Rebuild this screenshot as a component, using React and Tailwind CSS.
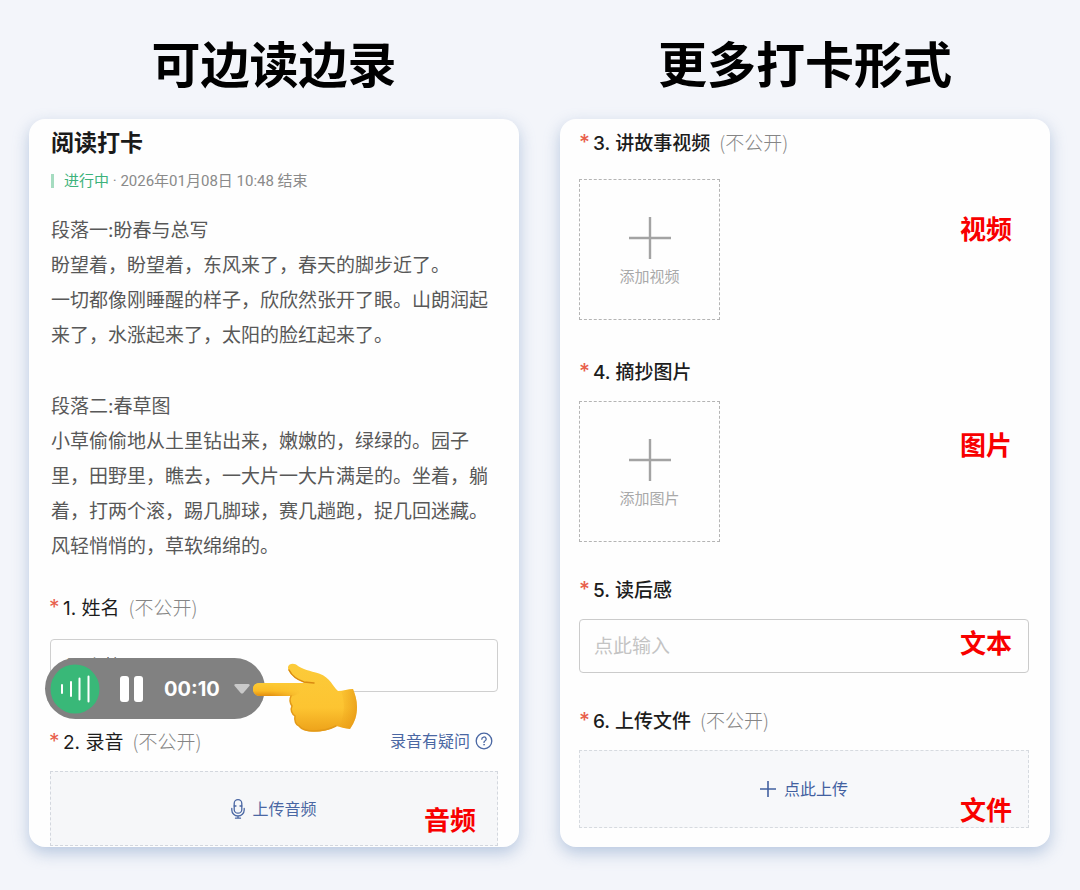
const CJK = "font-['Noto_Sans_CJK_SC',sans-serif]";
const LATIN = "font-['Inter','Noto_Sans_CJK_SC',sans-serif]";

function Title({ children }) {
  return (
    <h1 className={`${CJK} text-center text-[49px] font-bold leading-[60px] text-black`}>{children}</h1>
  );
}

function Card({ className, children }) {
  return (
    <section
      className={`${LATIN} grow rounded-2xl bg-[#fefefe] shadow-[0_6px_16px_rgba(120,150,195,0.48)] ${className}`}
    >
      {children}
    </section>
  );
}

function Question({ number, text, htmlFor, hidden, strong }) {
  const Label = htmlFor ? "label" : "h3";
  return (
    <Label
      htmlFor={htmlFor}
      className={`flex h-7 items-baseline text-[19px] leading-[28px] text-[#1c1c1c] ${strong ? "font-medium" : "font-normal"}`}
    >
      <span className={`w-[14px] shrink-0 text-[21px] text-[#e8604c] ${strong ? "" : "-ml-px"}`}>*</span>
      <span>
        {number}. {text}
      </span>
      {hidden && (
        <span className="ml-[9px] font-['Noto_Sans_CJK_SC',sans-serif] font-light text-[#858585]">(不公开)</span>
      )}
    </Label>
  );
}

function Tag({ className = "", children }) {
  return (
    <span className={`${CJK} text-[26px] font-bold leading-[26px] text-[#f80000] ${className}`}>{children}</span>
  );
}

function AddTile({ label, tag, tagClass }) {
  return (
    <div className="flex items-start justify-between pr-[17px]">
      <button
        type="button"
        className="flex size-[141px] flex-col items-center border border-dashed border-[#b4b4b4] pt-[37px]"
      >
        <svg viewBox="0 0 42 42" className="size-[42px]" stroke="#a3a3a3" strokeWidth="2.4" aria-hidden="true">
          <path d="M21 0V42M0 21H42" />
        </svg>
        <span className="mt-[7px] text-[15px] leading-[22px] text-[#a9a9a9]">{label}</span>
      </button>
      <Tag className={tagClass}>{tag}</Tag>
    </div>
  );
}

function Hand() {
  return (
    <svg viewBox="0 0 104 70" className="h-[70px] w-[104px]" aria-hidden="true">
      <defs>
        <linearGradient id="skin" x1="0" y1="0" x2="0" y2="1">
          <stop offset="0" stopColor="#fccb3a" />
          <stop offset="0.65" stopColor="#fdc431" />
          <stop offset="1" stopColor="#eda21a" />
        </linearGradient>
        <linearGradient id="finger" x1="0" y1="0" x2="0" y2="1">
          <stop offset="0" stopColor="#fccb35" />
          <stop offset="0.6" stopColor="#fbbb25" />
          <stop offset="1" stopColor="#e28d10" />
        </linearGradient>
        <linearGradient id="fade" x1="0" y1="0" x2="1" y2="0">
          <stop offset="0.3" stopColor="#fff" />
          <stop offset="0.85" stopColor="#000" />
        </linearGradient>
        <mask id="fingerFade" maskUnits="userSpaceOnUse" x="0" y="0" width="104" height="70">
          <rect width="56" height="70" fill="url(#fade)" />
        </mask>
        <linearGradient id="wrist" x1="0" y1="0" x2="1" y2="0">
          <stop offset="0" stopColor="#e99b12" stopOpacity="0" />
          <stop offset="1" stopColor="#e08d10" stopOpacity="0.6" />
        </linearGradient>
      </defs>
      <path
        fill="url(#skin)"
        d="M7 20C2 20 0 23 0 26C0 30 3 33 7 33L38 33C36 37 37 40 39 43C37 47 39 51 42 53C41 58 43 62 46 63C49 67 54 68.500 61 68.500C70 68.500 77 67 83 63C87 64 92 65.500 97 66C102 59 104 52 104 44C104 37 102 31 100 26C95 26 90 28 85 28C79 23 78 15 66 10.500C57 8 49 6 45 3C42 0 36 0 35 4C34.500 10 42 16 51 19.500L51 20Z"
      />
      <path
        fill="url(#finger)"
        mask="url(#fingerFade)"
        d="M7 20C2 20 0 23 0 26C0 30 3 33 7 33L40 33C46 31 50 28 56 20Z"
      />
      <path
        fill="none"
        stroke="#d98a12"
        strokeWidth="1.500"
        strokeLinecap="round"
        d="M36 7C39 13 45 17 51 19L61 20"
      />
      <path
        fill="none"
        stroke="#e39a18"
        strokeWidth="1.500"
        strokeLinecap="round"
        d="M38 33C36 37 37 40 39 43C37 47 39 51 42 53C41 58 43 62 46 63C49 67 54 68 61 68C70 68 77 66 83 63"
      />
      <path fill="url(#wrist)" d="M88 28C93 27 97 26 100 26C102 31 104 37 104 44C104 52 102 59 97 66L86 64C92 51 92 39 88 28Z" />
    </svg>
  );
}

function Recorder() {
  return (
    <div className="absolute -left-[5px] top-[19px] flex items-start">
      <div className="flex h-[61px] w-[220px] items-center rounded-full bg-[#818181] pl-[5px] text-white">
        <svg viewBox="0 0 50 50" className="size-[50px]" aria-hidden="true">
          <circle cx="25" cy="25" r="24.500" fill="#39b878" />
          <path d="M12 21V29M21 18V32M29.500 14.500V35.500M38.500 12.500V37.500" stroke="#fff" strokeWidth="2" strokeLinecap="round" />
        </svg>
        <button type="button" aria-label="暂停" className="ml-5 flex gap-[5px]">
          <span className="h-[26px] w-[9px] rounded-[3px] bg-white" />
          <span className="h-[26px] w-[9px] rounded-[3px] bg-white" />
        </button>
        <time className="ml-[21px] text-[20px] font-bold leading-6">00:10</time>
        <button type="button" aria-label="收起" className="ml-[14px]">
          <svg viewBox="0 0 16 10" className="h-[10px] w-4" aria-hidden="true">
            <path d="M1.500 0H14.500Q16.500 .5 15.300 2L9.300 9Q8 10.200 6.700 9L.7 2Q-.5.5 1.500 0Z" fill="#c9c9c9" />
          </svg>
        </button>
      </div>
      <div className="-ml-3 mt-[5px]">
        <Hand />
      </div>
    </div>
  );
}

export default function App() {
  return (
    <main className="grid min-h-screen grid-cols-2 items-start gap-x-[41px] bg-[#f3f5fa] pb-[43px] pl-[29px] pr-[30px] pt-8">
      <div className="flex flex-col gap-[27px] self-stretch">
        <Title>可边读边录</Title>
        <Card className="px-[21px] pb-[1px] pt-2">
          <h2 className="pl-px text-[23px] font-bold leading-8 text-[#1a1a1a]">阅读打卡</h2>
          <p className="mt-[11px] flex items-center whitespace-pre pl-px font-['Roboto','Noto_Sans_CJK_SC',sans-serif] text-[15px] leading-[22px] text-[#8a8a8a]">
            <span className="mr-[10px] h-[14px] w-[3px] bg-[#a5dcc0]" />
            <span className="text-[#3cb27b]">进行中</span>
            <span> · 2026年01月08日 10:48 结束</span>
          </p>
          <div className="mt-[21px] flex flex-col gap-9 pl-px text-[19px] leading-[35px] text-[#585858]">
            <p>
              段落一:盼春与总写
              <br />
              盼望着，盼望着，东风来了，春天的脚步近了。
              <br />
              一切都像刚睡醒的样子，欣欣然张开了眼。山朗润起来了，水涨起来了，太阳的脸红起来了。
            </p>
            <p>
              段落二:春草图
              <br />
              小草偷偷地从土里钻出来，嫩嫩的，绿绿的。园子里，田野里，瞧去，一大片一大片满是的。坐着，躺着，打两个滚，踢几脚球，赛几趟跑，捉几回迷藏。风轻悄悄的，草软绵绵的。
            </p>
          </div>
          <div className="mt-[29px]">
            <Question number={1} text="姓名" htmlFor="name" hidden />
          </div>
          <div className="relative mt-[18px]">
            <input
              id="name"
              defaultValue="子晓静"
              className="block h-[53px] w-full rounded-[4px] border border-[#cfcfcf] bg-transparent px-[14px] text-[19px] text-[#333]"
            />
            <Recorder />
          </div>
          <div className="mt-[35px] flex items-center justify-between pr-[5px]">
            <Question number={2} text="录音" hidden />
            <a href="#help" className="flex items-center gap-[5px] text-[16px] leading-6 text-[#4a67a3]">
              录音有疑问
              <svg viewBox="0 0 18 18" className="size-[18px]" fill="none" stroke="currentColor" strokeWidth="1.300" strokeLinecap="round" aria-hidden="true">
                <circle cx="9" cy="9" r="7.800" />
                <path d="M6.800 7.200A2.200 2.100 0 1 1 9.900 9Q9 9.500 9 10.400" />
                <circle cx="9" cy="12.700" r=".5" fill="currentColor" strokeWidth=".6" />
              </svg>
            </a>
          </div>
          <div className="relative mt-4">
            <button
              type="button"
              className="flex h-[75px] w-full items-center justify-center gap-[7px] border border-dashed border-[#d3d7de] bg-[#f6f7f9] text-[16px] text-[#4a67a3]"
            >
              <svg viewBox="0 0 14 20" className="h-5 w-[14px]" fill="none" stroke="currentColor" strokeWidth="1.300" strokeLinecap="round" aria-hidden="true">
                <rect x="3.200" y=".7" width="7.600" height="13.500" rx="3.800" />
                <path d="M.8 9.500V11A6.200 6 0 0 0 13.200 11V9.500M7 17V19M4.500 19.200H9.500M3.200 7H5M9 7H10.800" />
              </svg>
              上传音频
            </button>
            <Tag className="absolute bottom-[14px] right-[22px]">音频</Tag>
          </div>
        </Card>
      </div>

      <div className="flex flex-col gap-[27px] self-stretch">
        <Title>更多打卡形式</Title>
        <Card className="pb-[19px] pl-[19px] pr-[21px] pt-[9px]">
          <Question number={3} text="讲故事视频" hidden strong />
          <div className="mt-[23px]">
            <AddTile label="添加视频" tag="视频" tagClass="pt-9" />
          </div>
          <div className="mt-[38px]">
            <Question number={4} text="摘抄图片" strong />
          </div>
          <div className="mt-[15px]">
            <AddTile label="添加图片" tag="图片" tagClass="pt-[30px]" />
          </div>
          <div className="mt-[34px]">
            <Question number={5} text="读后感" htmlFor="review" strong />
          </div>
          <div className="relative mt-[15px]">
            <input
              id="review"
              placeholder="点此输入"
              className="block h-[54px] w-full rounded-[4px] border border-[#cbcbcb] bg-transparent px-[14px] text-[19px] placeholder:text-[#c4c4c4]"
            />
            <Tag className="absolute right-[17px] top-[10px]">文本</Tag>
          </div>
          <div className="mt-[33px]">
            <Question number={6} text="上传文件" hidden strong />
          </div>
          <div className="relative mt-4">
            <button
              type="button"
              className="flex h-[78px] w-full items-center justify-center gap-2 border border-dashed border-[#d6dadf] bg-[#f7f8fa] text-[16px] text-[#4260a0]"
            >
              <svg viewBox="0 0 16 16" className="size-4" stroke="currentColor" strokeWidth="1.600" aria-hidden="true">
                <path d="M8 0V16M0 8H16" />
              </svg>
              点此上传
            </button>
            <Tag className="absolute bottom-[6px] right-[17px]">文件</Tag>
          </div>
        </Card>
      </div>
    </main>
  );
}
